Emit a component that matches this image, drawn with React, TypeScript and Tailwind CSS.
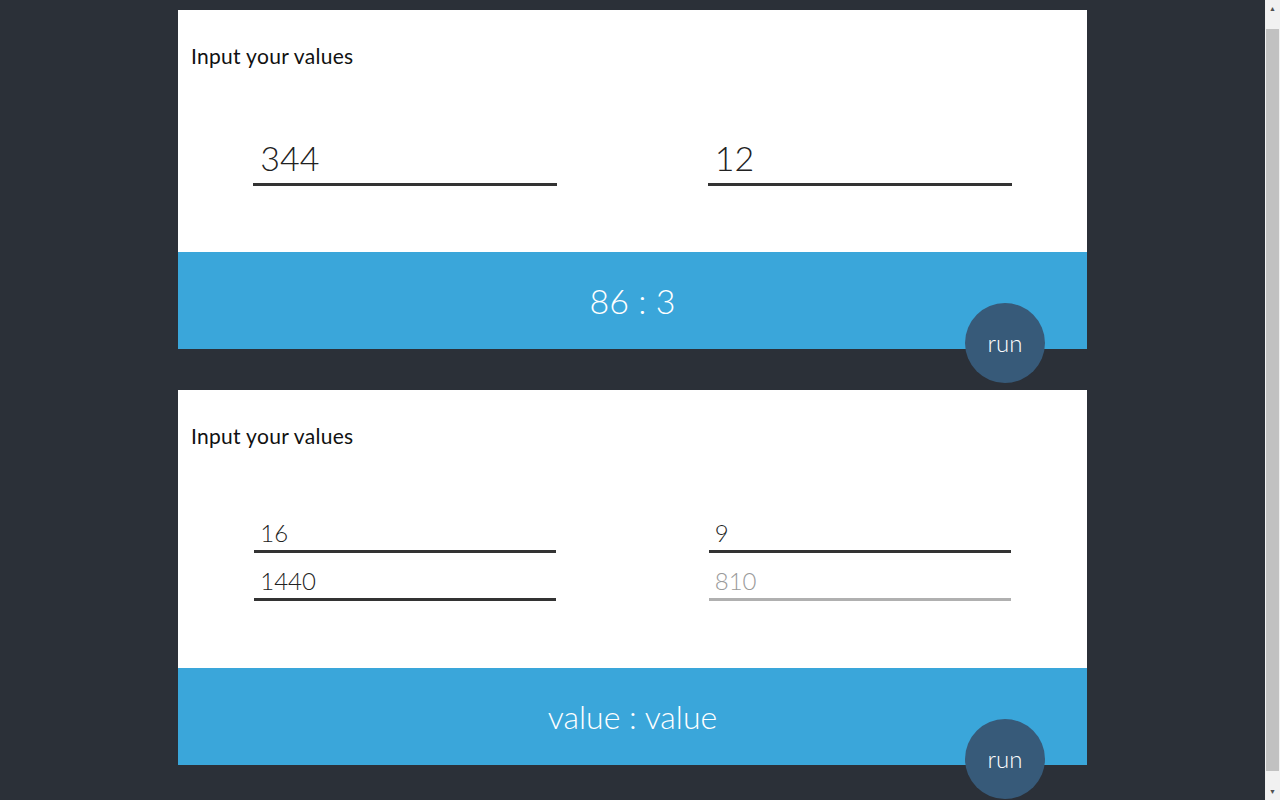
import React from 'react';

const font = { fontFamily: 'Lato, "Open Sans", sans-serif' };

interface Field {
  value: string;
  placeholder?: boolean;
}

const RunButton: React.FC = () => (
  <button className="absolute right-[42px] bottom-[-34px] w-[80px] h-[80px] rounded-full bg-[#375a79] text-white text-[24px] font-light flex items-center justify-center">
    run
  </button>
);

const InputBox: React.FC<{ field: Field; big?: boolean; width: string }> = ({ field, big, width }) => (
  <div
    className={`mx-auto ${width} ${
      field.placeholder ? 'border-[#b0b0b0] text-[#9a9a9a]' : 'border-[#333333] text-[#222222]'
    } border-b-[3px] ${big ? 'h-[53px] text-[34px] pl-[7px] pt-[1px]' : 'h-[38px] text-[24px] pl-[6px]'} font-light leading-[48px]`}
  >
    <span className={big ? 'leading-[48px]' : 'leading-[35px] block'}>{field.value}</span>
  </div>
);

const App: React.FC = () => {
  return (
    <div className="flex min-h-screen bg-[#2b3038]" style={font}>
      <div className="flex-1 pt-[10px] pb-[35px]">
        <div className="w-[909px] mx-auto flex flex-col gap-[41px]">
          {/* Card 1 */}
          <div className="relative">
            <div className="bg-white h-[242px] px-[13px] pt-[32px]">
              <h2 className="text-[21px] leading-[28px] tracking-[0.3px] text-[#111111]">Input your values</h2>
              <div className="grid grid-cols-2 mt-[63px] -mx-[13px]">
                <InputBox field={{ value: '344' }} big width="w-[304px]" />
                <InputBox field={{ value: '12' }} big width="w-[304px]" />
              </div>
            </div>
            <div className="bg-[#3aa6da] h-[97px] flex items-center justify-center text-white text-[34px] font-light">
              86 : 3
            </div>
            <RunButton />
          </div>

          {/* Card 2 */}
          <div className="relative">
            <div className="bg-white h-[278px] px-[13px] pt-[32px]">
              <h2 className="text-[21px] leading-[28px] tracking-[0.3px] text-[#111111]">Input your values</h2>
              <div className="grid grid-cols-2 gap-y-[10px] mt-[65px] -mx-[13px]">
                <InputBox field={{ value: '16' }} width="w-[302px]" />
                <InputBox field={{ value: '9' }} width="w-[302px]" />
                <InputBox field={{ value: '1440' }} width="w-[302px]" />
                <InputBox field={{ value: '810', placeholder: true }} width="w-[302px]" />
              </div>
            </div>
            <div className="bg-[#3aa6da] h-[97px] flex items-center justify-center text-white text-[32px] font-light">
              value : value
            </div>
            <RunButton />
          </div>
        </div>
      </div>

      {/* Scrollbar */}
      <div className="w-[15px] bg-[#f1f1f1] flex flex-col items-center">
        <div className="h-[17px] flex items-center justify-center text-[7px] text-[#505050]">▲</div>
        <div className="w-[13px] flex-1 my-[12px] bg-[#c1c1c1]" />
        <div className="h-[17px] flex items-center justify-center text-[7px] text-[#505050]">▼</div>
      </div>
    </div>
  );
};

export default App;
